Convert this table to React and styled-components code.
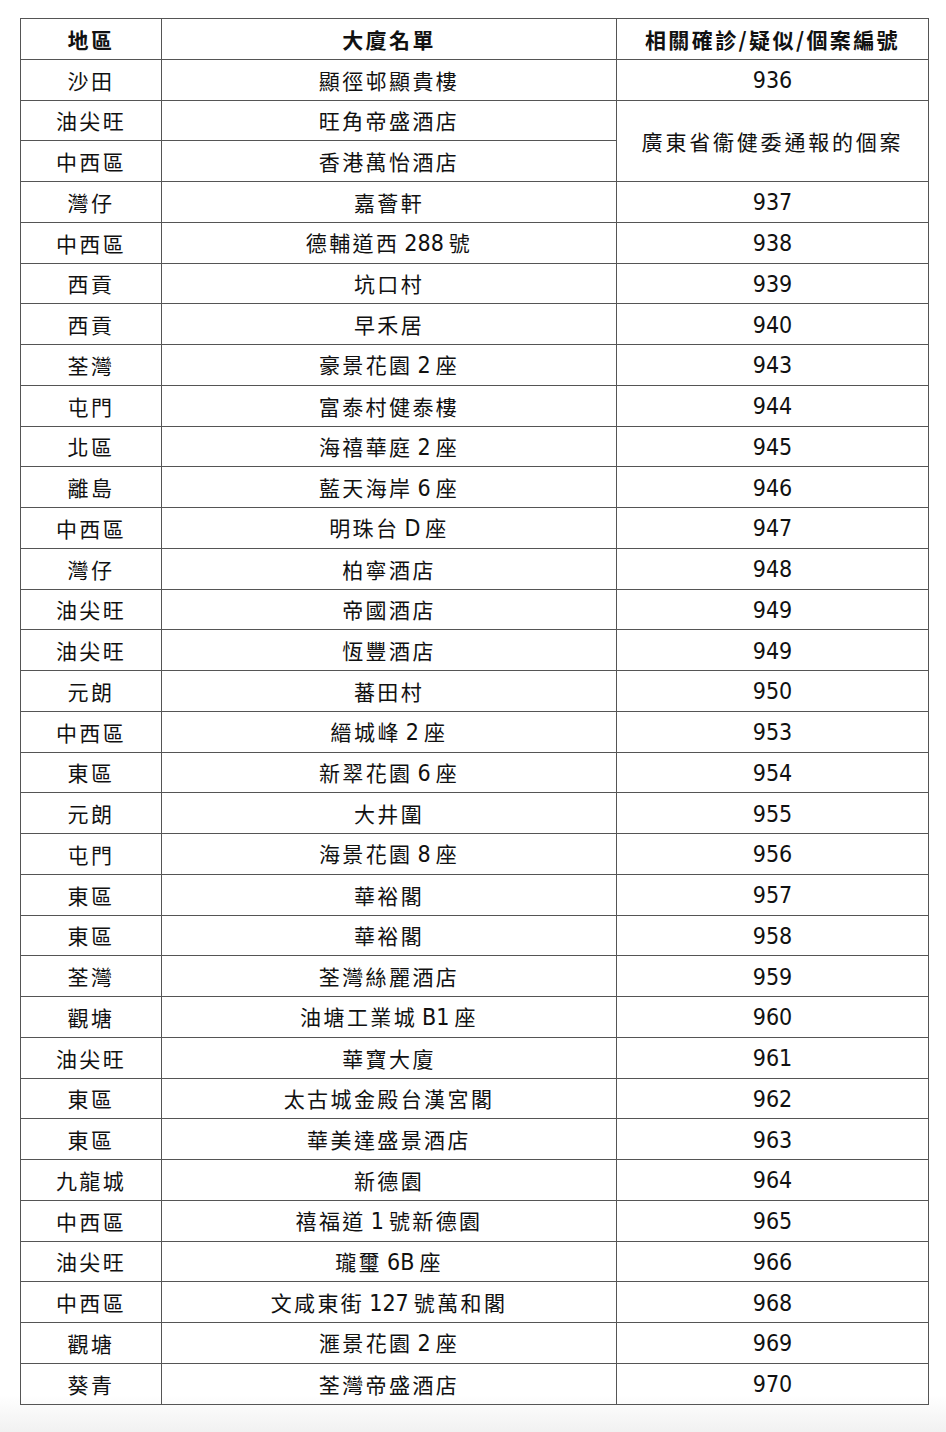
import React from "react";
import styled, { createGlobalStyle } from "styled-components";

const GlobalStyle = createGlobalStyle`
  html, body {
    margin: 0;
    padding: 0;
  }
  body {
    min-height: 1432px;
    background: linear-gradient(to bottom, #ffffff 0px, #ffffff 1395px, #f1f1f1 1432px);
    font-family: "Noto Sans CJK TC", "Noto Sans CJK SC", sans-serif;
    color: #111;
  }
`;

const Page = styled.div`
  padding: 18px 18px 0 20px;
`;

const Table = styled.table`
  border-collapse: collapse;
  table-layout: fixed;
  width: 908px;
  border: 1px solid #4a4a4a;
`;

const Row = styled.tr`
  height: 40.76px;
`;

const Cell = styled.td`
  border: 1px solid #555;
  padding: 0;
  text-align: center;
  vertical-align: middle;
  font-size: 21px;
  line-height: 24px;
  letter-spacing: ${({ $spread }) => ($spread ? "2.8px" : "2.4px")};
  font-weight: ${({ $head }) => ($head ? 700 : 400)};
  white-space: nowrap;
`;

const Num = styled.span`
  font-family: "Liberation Sans Narrow", "DejaVu Sans Condensed", sans-serif;
  font-size: 23px;
  letter-spacing: 0;
  padding: 0 ${({ $pad }) => ($pad ? "5px" : "0")};
`;

const rows = [
  ["沙田", "顯徑邨顯貴樓", "936"],
  ["油尖旺", "旺角帝盛酒店", null],
  ["中西區", "香港萬怡酒店", "skip"],
  ["灣仔", "嘉薈軒", "937"],
  ["中西區", "德輔道西288號", "938"],
  ["西貢", "坑口村", "939"],
  ["西貢", "早禾居", "940"],
  ["荃灣", "豪景花園2座", "943"],
  ["屯門", "富泰村健泰樓", "944"],
  ["北區", "海禧華庭2座", "945"],
  ["離島", "藍天海岸6座", "946"],
  ["中西區", "明珠台D座", "947"],
  ["灣仔", "柏寧酒店", "948"],
  ["油尖旺", "帝國酒店", "949"],
  ["油尖旺", "恆豐酒店", "949"],
  ["元朗", "蕃田村", "950"],
  ["中西區", "縉城峰2座", "953"],
  ["東區", "新翠花園6座", "954"],
  ["元朗", "大井圍", "955"],
  ["屯門", "海景花園8座", "956"],
  ["東區", "華裕閣", "957"],
  ["東區", "華裕閣", "958"],
  ["荃灣", "荃灣絲麗酒店", "959"],
  ["觀塘", "油塘工業城B1座", "960"],
  ["油尖旺", "華寶大廈", "961"],
  ["東區", "太古城金殿台漢宮閣", "962"],
  ["東區", "華美達盛景酒店", "963"],
  ["九龍城", "新德園", "964"],
  ["中西區", "禧福道1號新德園", "965"],
  ["油尖旺", "瓏璽6B座", "966"],
  ["中西區", "文咸東街127號萬和閣", "968"],
  ["觀塘", "滙景花園2座", "969"],
  ["葵青", "荃灣帝盛酒店", "970"],
];

// split latin runs (numbers / block letters) into narrow spans
const Mixed = ({ text }) => {
  const parts = text.split(/([0-9A-Z]+)/).filter(Boolean);
  return parts.map((p, i) =>
    /^[0-9A-Z]+$/.test(p) ? (
      <Num key={i} $pad>
        {p}
      </Num>
    ) : (
      <React.Fragment key={i}>{p}</React.Fragment>
    )
  );
};

export default function App() {
  return (
    <>
      <GlobalStyle />
      <Page>
        <Table>
          <colgroup>
            <col style={{ width: "141px" }} />
            <col style={{ width: "455px" }} />
            <col style={{ width: "312px" }} />
          </colgroup>
          <tbody>
            <Row>
              <Cell $head>地區</Cell>
              <Cell $head>大廈名單</Cell>
              <Cell $head>相關確診/疑似/個案編號</Cell>
            </Row>
            {rows.map(([area, name, id], i) => (
              <Row key={i}>
                <Cell>{area}</Cell>
                <Cell>
                  <Mixed text={name} />
                </Cell>
                {id === null ? (
                  <Cell rowSpan={2} $spread>
                    廣東省衞健委通報的個案
                  </Cell>
                ) : id === "skip" ? null : (
                  <Cell>
                    <Num>{id}</Num>
                  </Cell>
                )}
              </Row>
            ))}
          </tbody>
        </Table>
      </Page>
    </>
  );
}
